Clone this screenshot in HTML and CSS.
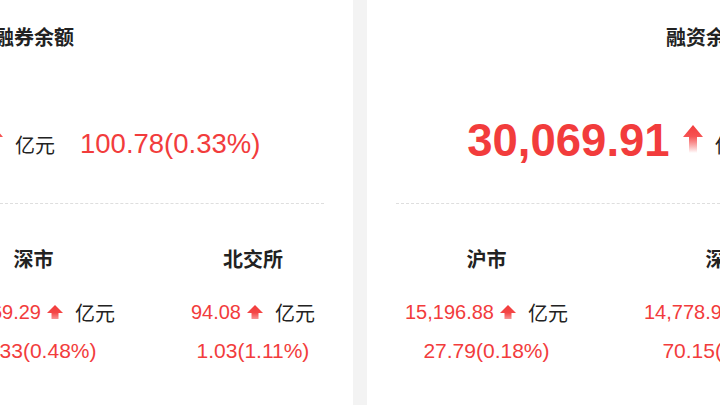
FILE: index.html
```html
<!DOCTYPE html>
<html lang="zh-CN">
<head>
<meta charset="utf-8">
<title>两融余额</title>
<link rel="stylesheet" href="styles.css">
</head>
<body>
<svg class="defs" aria-hidden="true">
  <defs>
    <linearGradient id="upBig" x1="0" y1="0" x2="0" y2="1">
      <stop offset="0" stop-color="#f23c3c"/>
      <stop offset="0.4" stop-color="#f65252"/>
      <stop offset="1" stop-color="#f23c3c" stop-opacity="0"/>
    </linearGradient>
    <linearGradient id="upSmall" x1="0" y1="0" x2="0" y2="1">
      <stop offset="0" stop-color="#f23c3c"/>
      <stop offset="0.55" stop-color="#f44646"/>
      <stop offset="1" stop-color="#f89494"/>
    </linearGradient>
  </defs>
</svg>

<div class="board">
  <section class="card">
    <h2 class="card-title">融资融券余额</h2>
    <div class="total">
      <span class="total-value">30,264.99</span>
      <svg class="arrow-big" viewBox="0 0 20 28"><path d="M10 0L20 12H14V28H6V12H0Z" fill="url(#upBig)"/></svg>
      <span class="unit-big">亿元</span>
      <span class="total-change">100.78(0.33%)</span>
    </div>
    <div class="divider"></div>
    <div class="markets">
      <div class="market">
        <div class="market-name">沪市</div>
        <div class="market-value">
          <span class="num">15,301.62</span>
          <svg class="arrow-small" viewBox="0 0 16 14"><path d="M8 0L16 8H11.5V14H4.5V8H0Z" fill="url(#upSmall)"/></svg>
          <span class="unit">亿元</span>
        </div>
        <div class="market-change">28.42(0.19%)</div>
      </div>
      <div class="market">
        <div class="market-name">深市</div>
        <div class="market-value">
          <span class="num">14,869.29</span>
          <svg class="arrow-small" viewBox="0 0 16 14"><path d="M8 0L16 8H11.5V14H4.5V8H0Z" fill="url(#upSmall)"/></svg>
          <span class="unit">亿元</span>
        </div>
        <div class="market-change">71.33(0.48%)</div>
      </div>
      <div class="market">
        <div class="market-name">北交所</div>
        <div class="market-value">
          <span class="num">94.08</span>
          <svg class="arrow-small" viewBox="0 0 16 14"><path d="M8 0L16 8H11.5V14H4.5V8H0Z" fill="url(#upSmall)"/></svg>
          <span class="unit">亿元</span>
        </div>
        <div class="market-change">1.03(1.11%)</div>
      </div>
    </div>
  </section>

  <section class="card">
    <h2 class="card-title">融资余额</h2>
    <div class="total">
      <span class="total-value">30,069.91</span>
      <svg class="arrow-big" viewBox="0 0 20 28"><path d="M10 0L20 12H14V28H6V12H0Z" fill="url(#upBig)"/></svg>
      <span class="unit-big">亿元</span>
      <span class="total-change">98.97(0.33%)</span>
    </div>
    <div class="divider"></div>
    <div class="markets">
      <div class="market">
        <div class="market-name">沪市</div>
        <div class="market-value">
          <span class="num">15,196.88</span>
          <svg class="arrow-small" viewBox="0 0 16 14"><path d="M8 0L16 8H11.5V14H4.5V8H0Z" fill="url(#upSmall)"/></svg>
          <span class="unit">亿元</span>
        </div>
        <div class="market-change">27.79(0.18%)</div>
      </div>
      <div class="market">
        <div class="market-name">深市</div>
        <div class="market-value">
          <span class="num">14,778.95</span>
          <svg class="arrow-small" viewBox="0 0 16 14"><path d="M8 0L16 8H11.5V14H4.5V8H0Z" fill="url(#upSmall)"/></svg>
          <span class="unit">亿元</span>
        </div>
        <div class="market-change">70.15(0.48%)</div>
      </div>
      <div class="market">
        <div class="market-name">北交所</div>
        <div class="market-value">
          <span class="num">94.08</span>
          <svg class="arrow-small" viewBox="0 0 16 14"><path d="M8 0L16 8H11.5V14H4.5V8H0Z" fill="url(#upSmall)"/></svg>
          <span class="unit">亿元</span>
        </div>
        <div class="market-change">1.03(1.11%)</div>
      </div>
    </div>
  </section>
</div>
</body>
</html>
```

FILE: styles.css
```css
html, body {
  margin: 0;
  padding: 0;
}

body {
  background: #f3f3f3;
  overflow: hidden;
  font-family: "Liberation Sans", "Noto Sans CJK SC", sans-serif;
  color: #222;
}

.defs {
  display: block;
  width: 0;
  height: 0;
}

/* two balance cards side by side; the row is wider than the window */
.board {
  display: flex;
  gap: 14px;
  width: 1370px;
  margin-left: -325px;
}

.card {
  flex: none;
  width: 678px;
  height: 405px;
  background: #fff;
  box-sizing: border-box;
}

.card-title {
  margin: 0;
  padding-top: 28px;
  font-size: 20px;
  line-height: 20px;
  font-weight: 700;
  text-align: center;
  color: #222;
}

/* headline figure */
.total {
  margin-top: 67px;
  height: 52px;
  display: flex;
  align-items: center;
  justify-content: center;
}

.total-value {
  font-size: 45.5px;
  font-weight: 700;
  color: #f23c3c;
  line-height: 52px;
}

.arrow-big {
  width: 20px;
  height: 28px;
  margin-left: 13px;
  margin-top: -4px;
}

.unit-big {
  margin-left: 12px;
  font-size: 20px;
  color: #222;
  margin-top: 6px;
}

.total-change {
  margin-left: 25px;
  font-size: 27.5px;
  color: #f23c3c;
  margin-top: 6px;
}

.divider {
  margin: 36px 29px 0;
  border-top: 1px dashed #dedede;
}

/* per-exchange breakdown */
.markets {
  display: flex;
  justify-content: space-around;
  padding-top: 42px;
}

.market {
  display: flex;
  flex-direction: column;
  align-items: center;
}

.market-name {
  font-size: 20px;
  font-weight: 700;
  line-height: 28px;
  color: #222;
}

.market-value {
  margin-top: 24px;
  height: 28px;
  display: flex;
  align-items: center;
}

.num {
  font-size: 20px;
  color: #f23c3c;
}

.arrow-small {
  width: 16px;
  height: 14px;
  margin-left: 6px;
}

.unit {
  margin-left: 12px;
  font-size: 20px;
  color: #222;
}

.market-change {
  margin-top: 11px;
  font-size: 21px;
  line-height: 28px;
  color: #f23c3c;
}
```
